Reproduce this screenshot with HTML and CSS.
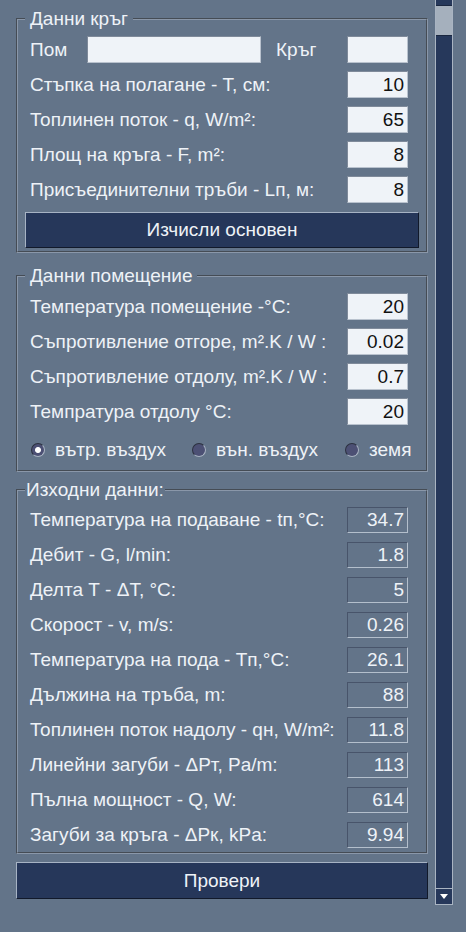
FILE: index.html
```html
<!DOCTYPE html>
<html lang="bg">
<head>
    <meta charset="UTF-8">
    <meta name="viewport" content="width=device-width, initial-scale=1.0">
    <title>Подово отопление - кръг</title>
    <link rel="stylesheet" href="styles.css">
</head>
<body>
    <div class="app">
        <main class="panel">
            <fieldset class="group group-circuit">
                <legend>Данни кръг</legend>
                <div class="row row-top">
                    <label for="room" class="label-room">Пом</label>
                    <input type="text" id="room" class="field field-room">
                    <label for="circuit" class="label-circuit">Кръг</label>
                    <input type="text" id="circuit" class="field">
                </div>
                <div class="row">
                    <label for="step">Стъпка на полагане - Т, см:</label>
                    <input type="text" id="step" class="field" value="10">
                </div>
                <div class="row">
                    <label for="flux">Топлинен поток - q, W/m²:</label>
                    <input type="text" id="flux" class="field" value="65">
                </div>
                <div class="row">
                    <label for="area">Площ на кръга - F, m²:</label>
                    <input type="text" id="area" class="field" value="8">
                </div>
                <div class="row">
                    <label for="pipes">Присъединителни тръби - Lп, м:</label>
                    <input type="text" id="pipes" class="field" value="8">
                </div>
                <button type="button" class="action action-calc">Изчисли основен</button>
            </fieldset>

            <fieldset class="group group-room">
                <legend>Данни помещение</legend>
                <div class="row">
                    <label for="room-temp">Температура помещение -°C:</label>
                    <input type="text" id="room-temp" class="field" value="20">
                </div>
                <div class="row">
                    <label for="res-up">Съпротивление отгоре, m².K / W :</label>
                    <input type="text" id="res-up" class="field" value="0.02">
                </div>
                <div class="row">
                    <label for="res-down">Съпротивление отдолу, m².K / W :</label>
                    <input type="text" id="res-down" class="field" value="0.7">
                </div>
                <div class="row">
                    <label for="temp-down">Темпратура отдолу °C:</label>
                    <input type="text" id="temp-down" class="field" value="20">
                </div>
                <div class="row radios">
                    <label class="choice choice-in"><input type="radio" name="below" checked> вътр. въздух</label>
                    <label class="choice choice-out"><input type="radio" name="below"> вън. въздух</label>
                    <label class="choice choice-ground"><input type="radio" name="below"> земя</label>
                </div>
            </fieldset>

            <fieldset class="group group-result">
                <legend class="legend-tight">Изходни данни:</legend>
                <div class="row"><span>Температура на подаване - tп,°C:</span><output class="result">34.7</output></div>
                <div class="row"><span>Дебит - G, l/min:</span><output class="result">1.8</output></div>
                <div class="row"><span>Делта Т - ΔT, °C:</span><output class="result">5</output></div>
                <div class="row"><span>Скорост - v, m/s:</span><output class="result">0.26</output></div>
                <div class="row"><span>Температура на пода - Tп,°C:</span><output class="result">26.1</output></div>
                <div class="row"><span>Дължина на тръба, m:</span><output class="result">88</output></div>
                <div class="row"><span>Топлинен поток надолу - qн, W/m²:</span><output class="result">11.8</output></div>
                <div class="row"><span>Линейни загуби - ΔPт, Pa/m:</span><output class="result">113</output></div>
                <div class="row"><span>Пълна мощност - Q, W:</span><output class="result">614</output></div>
                <div class="row"><span>Загуби за кръга - ΔPк, kPa:</span><output class="result">9.94</output></div>
            </fieldset>

            <button type="button" class="action action-check">Провери</button>
        </main>

        <div class="scrollbar">
            <div class="sb-button sb-up"><span class="arrow-up"></span></div>
            <div class="sb-thumb"></div>
            <div class="sb-track"></div>
            <div class="sb-button sb-down"><span class="arrow-down"></span></div>
        </div>
    </div>
</body>
</html>
```

FILE: styles.css
```css
body {
    margin: 0;
    background-color: #637489; /* slate panel background */
    font-family: 'Liberation Sans', Arial, sans-serif;
    font-size: 19px;
    color: #eef2f7;
    overflow: hidden;
}
.app {
    display: flex;
    align-items: flex-start;
    padding: 8px 0 0 16px;
}
.panel {
    width: 412px;
}

/* group boxes */
.group {
    margin: 0;
    padding: 2px 7px 3px;
    border: 2px groove #8a97a9;
    box-sizing: border-box;
    width: 100%;
}
.group legend {
    padding: 0 5px;
    line-height: 22px;
}
.group legend.legend-tight {
    padding: 0 1px;
}
.group-room {
    margin-top: 12px;
    padding-bottom: 3px;
}
.group-result {
    margin-top: 7px;
    padding-top: 1px;
    padding-bottom: 0;
}

/* rows */
.row {
    display: flex;
    align-items: center;
    justify-content: space-between;
    height: 35px;
    padding: 0 11px 0 5px;
    white-space: nowrap;
}
.field {
    width: 61px;
    height: 27px;
    box-sizing: border-box;
    padding: 0 3px;
    border: 1px solid #b9c2ce;
    border-top-color: #7f8a9a;
    border-left-color: #7f8a9a;
    background-color: #eff3f8;
    font: inherit;
    color: #111;
    text-align: right;
    outline: none;
}
.row-top {
    justify-content: flex-start;
}
.label-room {
    width: 57px;
}
.row-top .field-room {
    width: 174px;
}
.label-circuit {
    margin-left: 15px;
    margin-right: auto;
}
.result {
    width: 61px;
    height: 26px;
    box-sizing: border-box;
    padding: 0 3px;
    border: 1px solid #b4bfcc;
    border-top-color: #48546a;
    border-left-color: #48546a;
    text-align: right;
    line-height: 24px;
}

/* radio choices */
.radios {
    margin-top: 3px;
    justify-content: flex-start;
    padding: 0 0 0 6px;
}
.choice {
    display: flex;
    align-items: center;
    flex-shrink: 0;
}
.choice input {
    appearance: none;
    flex-shrink: 0;
    width: 14px;
    height: 14px;
    margin: 0 10px 0 0;
    border-radius: 50%;
    border: 1px solid #a9b3c2;
    border-top-color: #2c3140;
    border-left-color: #2c3140;
    background-color: #4c5074;
}
.choice input:checked {
    background: radial-gradient(circle, #ffffff 0 2.5px, #4c5074 3.5px);
}
.choice-out {
    margin-left: 26px;
}
.choice-ground {
    margin-left: 27px;
}

/* buttons */
.action {
    display: block;
    width: 100%;
    border: 1px solid #11192a;
    border-top-color: #a7b3c4;
    border-left-color: #a7b3c4;
    background-color: #26375a;
    color: #eef2f7;
    font: inherit;
    cursor: pointer;
}
.action-calc {
    height: 36px;
    margin-top: 5px;
}
.action-check {
    height: 37px;
    margin-top: 8px;
}

/* fake scrollbar */
.scrollbar {
    display: flex;
    flex-direction: column;
    width: 18px;
    height: 916px;
    margin: -19px 0 0 7px;
    box-sizing: border-box;
    border: 1px solid #a9b4c2;
    border-top: none;
    background-color: #26385b;
}
.sb-button {
    display: flex;
    justify-content: center;
    align-items: center;
    background-color: #26385b;
}
.sb-up {
    height: 16px;
    border-bottom: 1px solid #1a2740;
}
.sb-down {
    height: 15px;
    border-top: 1px solid #a9b4c2;
}
.sb-thumb {
    height: 29px;
    background-color: #a5b0bd;
    border-bottom: 1px solid #1a2740;
}
.sb-track {
    flex: 1;
}
.arrow-up,
.arrow-down {
    width: 0;
    height: 0;
    border-left: 4px solid transparent;
    border-right: 4px solid transparent;
}
.arrow-up {
    border-bottom: 5px solid #ffffff;
}
.arrow-down {
    border-top: 5px solid #ffffff;
}
```
